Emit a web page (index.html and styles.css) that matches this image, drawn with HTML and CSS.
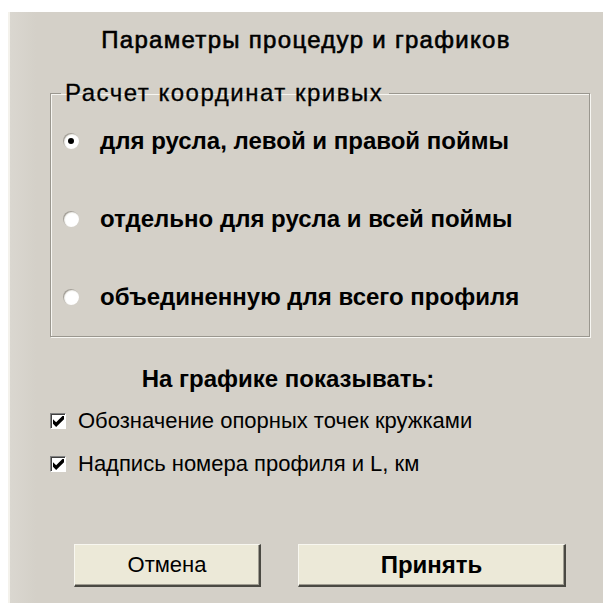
FILE: index.html
```html
<!DOCTYPE html>
<html lang="ru">
<head>
<meta charset="utf-8">
<title>Параметры процедур и графиков</title>
<link rel="stylesheet" href="styles.css">
</head>
<body>
<div class="dialog">
  <h1 class="title">Параметры процедур и графиков</h1>

  <fieldset class="group">
    <legend class="group-caption">Расчет координат кривых</legend>
    <label class="radio-row">
      <span class="radio checked"></span>
      <span class="radio-text">для русла, левой и правой поймы</span>
    </label>
    <label class="radio-row">
      <span class="radio"></span>
      <span class="radio-text">отдельно для русла и всей поймы</span>
    </label>
    <label class="radio-row">
      <span class="radio"></span>
      <span class="radio-text">объединенную для всего профиля</span>
    </label>
  </fieldset>

  <h2 class="subtitle">На графике показывать:</h2>

  <label class="check-row">
    <span class="check"><svg viewBox="0 0 7 7" width="11" height="11"><path d="M0 2 L2 4 L6 0 L7 0 L7 2 L2 7 L0 5 Z" fill="#000"/></svg></span>
    <span class="check-text">Обозначение опорных точек кружками</span>
  </label>
  <label class="check-row">
    <span class="check"><svg viewBox="0 0 7 7" width="11" height="11"><path d="M0 2 L2 4 L6 0 L7 0 L7 2 L2 7 L0 5 Z" fill="#000"/></svg></span>
    <span class="check-text">Надпись номера профиля и L, км</span>
  </label>

  <div class="buttons">
    <button class="btn btn-cancel" type="button">Отмена</button>
    <button class="btn btn-ok" type="button">Принять</button>
  </div>
</div>
</body>
</html>
```

FILE: styles.css
```css
html, body {
  margin: 0;
  padding: 0;
  background: #ffffff;
}

body {
  padding-top: 12px;
  font-family: "Liberation Sans", Arial, sans-serif;
  color: #000;
}

.dialog {
  margin-left: 8px;
  height: 591px;
  box-sizing: border-box;
  background: linear-gradient(to right, #dad7d0 0, #d4d0c8 26px);
  border-left: 2px solid #f4f2ec;
  display: flex;
  flex-direction: column;
  padding: 0 13px 0 40px;
}

.title {
  margin: 16px 0 0 0;
  font-size: 24px;
  font-weight: normal;
  letter-spacing: 1.3px;
  -webkit-text-stroke: 0.6px #000;
  text-align: center;
  padding-right: 28px;
  line-height: 24px;
}

.group {
  margin: 29px 0 0 0;
  padding: 24px 0 0 12px;
  height: 256px;
  box-sizing: border-box;
  border: 1px solid #9a978f;
  box-shadow: 1px 1px 0 #f7f6f2, inset 1px 1px 0 #f7f6f2;
  display: flex;
  flex-direction: column;
}

.group-caption {
  font-size: 24px;
  line-height: 24px;
  letter-spacing: 1.5px;
  padding: 0 6px 0 4px;
  margin-left: -2px;
  -webkit-text-stroke: 0.3px #000;
}

.radio-row {
  display: flex;
  align-items: center;
  height: 24px;
  margin-bottom: 54px;
}

.radio {
  width: 16px;
  height: 16px;
  border-radius: 50%;
  background: radial-gradient(circle at 58% 58%, #ffffff 48%, #eeece6 70%, #c2beb5 100%);
  box-shadow: inset 1px 1px 1px #9e9a92;
  position: relative;
  flex: none;
}
.radio.checked::after {
  content: "";
  position: absolute;
  left: 5px;
  top: 5px;
  width: 6px;
  height: 6px;
  border-radius: 50%;
  background: #000;
}

.radio-text {
  margin-left: 21px;
  font-size: 24px;
  font-weight: bold;
}

.subtitle {
  margin: 30px 0 0 0;
  font-size: 24px;
  font-weight: bold;
  text-align: center;
  padding-right: 64px;
  line-height: 24px;
}

.check-row {
  display: flex;
  align-items: center;
  height: 24px;
  margin-top: 18px;
}
.check-row + .check-row { margin-top: 19px; }

.check {
  width: 16px;
  height: 16px;
  background: #fff;
  border-top: 1px solid #808080;
  border-left: 1px solid #808080;
  border-right: 1px solid #ffffff;
  border-bottom: 1px solid #ffffff;
  box-shadow: inset 1px 1px 0 #404040;
  box-sizing: border-box;
  display: flex;
  align-items: center;
  justify-content: center;
  padding: 1px 0 0 1px;
  flex: none;
}

.check-text {
  margin-left: 12px;
  font-size: 22px;
}

.buttons {
  margin-top: auto;
  margin-bottom: 16px;
  display: flex;
  gap: 37px;
  padding-left: 24px;
}

.btn {
  height: 43px;
  background: #ece9d8;
  border: none;
  border-top: 1px solid #f8f7f0;
  border-left: 1px solid #f8f7f0;
  border-right: 2px solid #4a4943;
  border-bottom: 2px solid #4a4943;
  box-shadow: inset -1px -1px 0 #a09d92;
  font-family: "Liberation Sans", Arial, sans-serif;
  font-size: 22px;
  color: #000;
  padding: 0;
}

.btn-cancel { width: 187px; }
.btn-ok {
  width: 268px;
  font-size: 24px;
  font-weight: bold;
}
```
